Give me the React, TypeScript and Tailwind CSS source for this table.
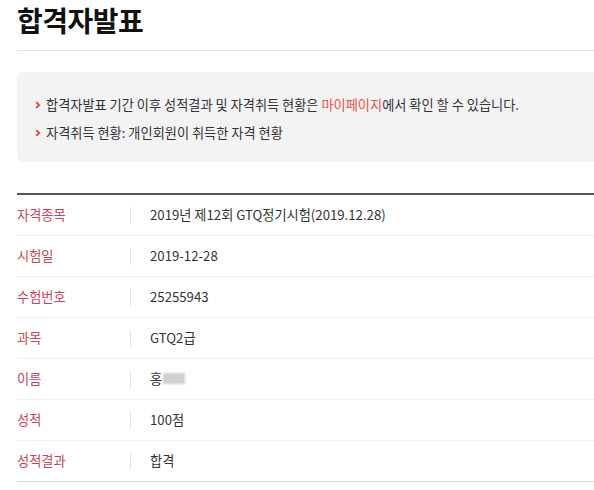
const rows = [
  { label: "자격종목", value: "2019년 제12회 GTQ정기시험(2019.12.28)" },
  { label: "시험일", value: "2019-12-28" },
  { label: "수험번호", value: "25255943" },
  { label: "과목", value: "GTQ2급" },
  { label: "이름", value: "홍", masked: true },
  { label: "성적", value: "100점" },
  { label: "성적결과", value: "합격" },
];

function Arrow() {
  return (
    <svg width="6" height="8" viewBox="0 0 6 8" className="shrink-0 mr-[5px]">
      <path d="M1.2 1.2L4.2 4L1.2 6.8" stroke="#e0473a" strokeWidth="1.8" fill="none" />
    </svg>
  );
}

export default function App() {
  return (
    <div
      className="w-[594px] h-[490px] overflow-hidden bg-white pl-[17px] text-[#333]"
      style={{ fontFamily: '"Noto Sans CJK KR", "Noto Sans", sans-serif' }}
    >
      <div className="w-[620px]">
        {/* Title */}
        <h1 className="pt-[1px] h-[51px] text-[28px] font-bold leading-[38px] tracking-[-0.5px] text-[#111] border-b border-[#e2e2e2]">
          합격자발표
        </h1>

        {/* Notice box */}
        <div className="mt-[21px] h-[90px] rounded-md bg-[#f3f3f5] px-[18px] pt-[19px] text-[13.2px] text-[#333]">
          <p className="flex items-center h-[28px]">
            <Arrow />
            합격자발표 기간 이후 성적결과 및 자격취득 현황은&nbsp;
            <span className="text-[#e8553d]">마이페이지</span>에서 확인 할 수 있습니다.
          </p>
          <p className="flex items-center h-[28px]">
            <Arrow />
            자격취득 현황: 개인회원이 취득한 자격 현황
          </p>
        </div>

        {/* Result table */}
        <div className="mt-[31px] border-t-2 border-[#555]">
          {rows.map((r, i) => (
            <div
              key={r.label}
              className={`flex items-center h-[41px] border-b ${
                i === rows.length - 1 ? "border-[#d8d8d8]" : "border-[#eeeeee]"
              } text-[13.2px]`}
            >
              <div className="w-[113px] text-[#c9455b]">{r.label}</div>
              <div className="w-px h-[17px] bg-[#e3e3e3]" />
              <div className="pl-[19px] text-[#333] flex items-center">
                {r.value}
                {r.masked && (
                  <span className="ml-[1px] inline-block w-[22px] h-[11px] bg-[#cfcfcf] blur-[1px]" />
                )}
              </div>
            </div>
          ))}
        </div>
      </div>
    </div>
  );
}
